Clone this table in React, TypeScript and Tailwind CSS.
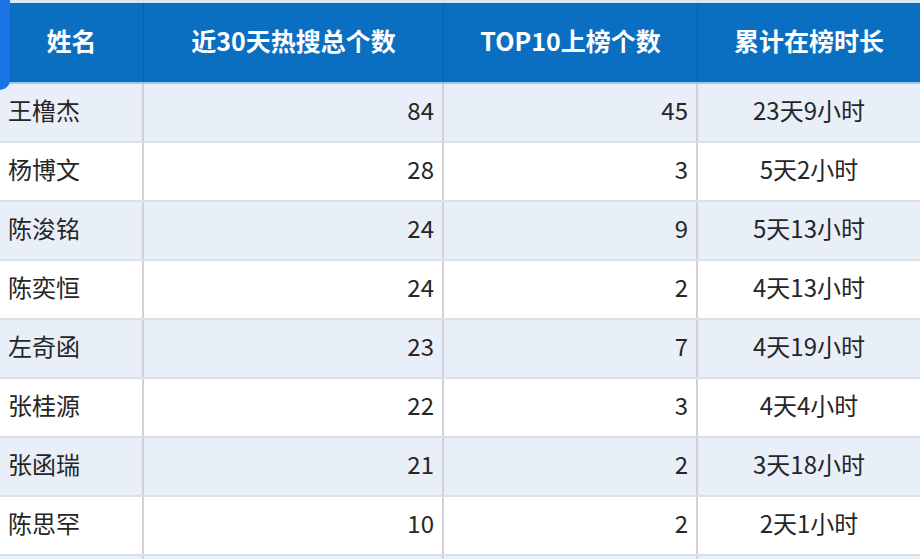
import React from 'react';

const rows = [
  { name: '王橹杰', total: 84, top: 45, time: '23天9小时' },
  { name: '杨博文', total: 28, top: 3, time: '5天2小时' },
  { name: '陈浚铭', total: 24, top: 9, time: '5天13小时' },
  { name: '陈奕恒', total: 24, top: 2, time: '4天13小时' },
  { name: '左奇函', total: 23, top: 7, time: '4天19小时' },
  { name: '张桂源', total: 22, top: 3, time: '4天4小时' },
  { name: '张函瑞', total: 21, top: 2, time: '3天18小时' },
  { name: '陈思罕', total: 10, top: 2, time: '2天1小时' },
  { name: '', total: '', top: '', time: '' },
];

export default function App() {
  return (
    <div
      className="relative w-[920px] h-[559px] overflow-hidden bg-white"
      style={{ fontFamily: '"Noto Sans CJK SC", "Noto Sans", sans-serif' }}
    >
      <div className="h-[3px] bg-[#d6e8f6]" />
      {/* header */}
      <div className="grid grid-cols-[144px_300px_254px_1fr] h-[79px] bg-[#0b6fc1] text-white text-[25px] font-bold">
        <div className="flex items-center justify-center pb-[4px] border-r border-[#0a5ea6]">姓名</div>
        <div className="flex items-center justify-center pb-[4px] border-r border-[#0a5ea6]">近30天热搜总个数</div>
        <div className="flex items-center justify-center pb-[4px] border-r border-[#0a5ea6]">TOP10上榜个数</div>
        <div className="flex items-center justify-center pb-[4px]">累计在榜时长</div>
      </div>
      <div className="h-[2px] bg-[#9fc7ea]" />

      {rows.map((r, i) => (
        <div
          key={i}
          className={`grid grid-cols-[144px_300px_254px_1fr] h-[59px] border-b-2 border-[#dcdfe4] text-[24px] text-[#262626] ${
            i % 2 === 0 ? 'bg-[#e9eff8]' : 'bg-white'
          }`}
        >
          <div className="flex items-center pl-[8px] pb-[5px] border-r-2 border-[#cfd1d6]">{r.name}</div>
          <div className="flex items-center justify-end pr-[8px] pb-[5px] border-r-2 border-[#cfd1d6]">{r.total}</div>
          <div className="flex items-center justify-end pr-[8px] pb-[5px] border-r-2 border-[#cfd1d6]">{r.top}</div>
          <div className="flex items-center justify-center pb-[5px]">{r.time}</div>
        </div>
      ))}

      {/* selection handle at left edge */}
      <div className="absolute left-0 top-0 w-[10px] h-[90px] bg-[#1a74e6] rounded-br-[10px]" />
    </div>
  );
}
